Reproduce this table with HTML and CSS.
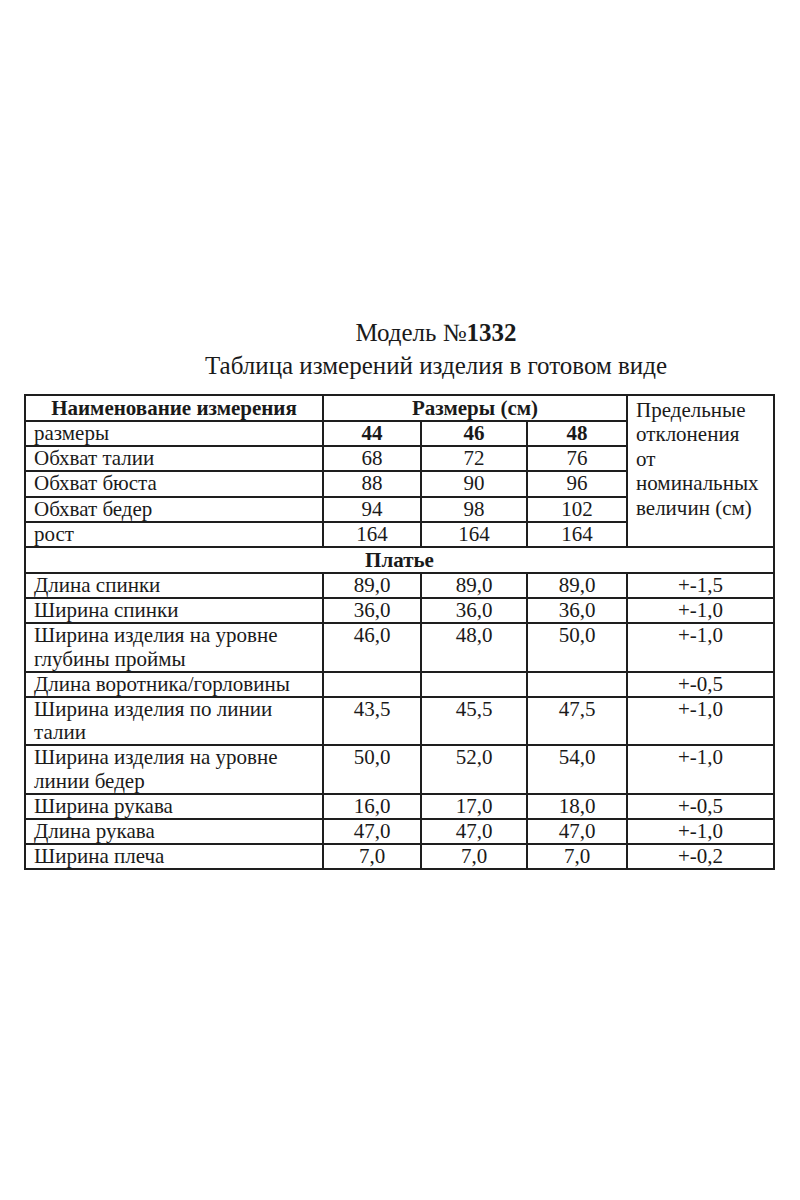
FILE: index.html
```html
<!DOCTYPE html>
<html lang="ru">
<head>
<meta charset="utf-8">
<link rel="stylesheet" href="styles.css">
</head>
<body>
<div class="page">
  <div class="titles">
    <div class="title">Модель №<b>1332</b></div>
    <div class="subtitle">Таблица измерений изделия в готовом виде</div>
  </div>
  <table class="sizes">
    <colgroup>
      <col class="c-name"><col class="c-s"><col class="c-s2"><col class="c-s3"><col class="c-dev">
    </colgroup>
    <tr class="r1">
      <th class="hname">Наименование измерения</th>
      <th colspan="3">Размеры (см)</th>
      <td rowspan="6" class="devhead">Предельные<br>отклонения<br>от<br>номинальных<br>величин (см)</td>
    </tr>
    <tr><td class="name">размеры</td><td class="num b">44</td><td class="num b">46</td><td class="num b">48</td></tr>
    <tr><td class="name">Обхват талии</td><td class="num">68</td><td class="num">72</td><td class="num">76</td></tr>
    <tr><td class="name">Обхват бюста</td><td class="num">88</td><td class="num">90</td><td class="num">96</td></tr>
    <tr><td class="name">Обхват бедер</td><td class="num">94</td><td class="num">98</td><td class="num">102</td></tr>
    <tr><td class="name">рост</td><td class="num">164</td><td class="num">164</td><td class="num">164</td></tr>
    <tr><th colspan="5" class="section">Платье</th></tr>
    <tr><td class="name">Длина спинки</td><td class="num">89,0</td><td class="num">89,0</td><td class="num">89,0</td><td class="num">+-1,5</td></tr>
    <tr><td class="name">Ширина спинки</td><td class="num">36,0</td><td class="num">36,0</td><td class="num">36,0</td><td class="num">+-1,0</td></tr>
    <tr><td class="name">Ширина изделия на уровне<br>глубины проймы</td><td class="num">46,0</td><td class="num">48,0</td><td class="num">50,0</td><td class="num">+-1,0</td></tr>
    <tr><td class="name">Длина воротника/горловины</td><td class="num"></td><td class="num"></td><td class="num"></td><td class="num">+-0,5</td></tr>
    <tr><td class="name">Ширина изделия по линии<br>талии</td><td class="num">43,5</td><td class="num">45,5</td><td class="num">47,5</td><td class="num">+-1,0</td></tr>
    <tr><td class="name">Ширина изделия на уровне<br>линии бедер</td><td class="num">50,0</td><td class="num">52,0</td><td class="num">54,0</td><td class="num">+-1,0</td></tr>
    <tr><td class="name">Ширина рукава</td><td class="num">16,0</td><td class="num">17,0</td><td class="num">18,0</td><td class="num">+-0,5</td></tr>
    <tr><td class="name">Длина рукава</td><td class="num">47,0</td><td class="num">47,0</td><td class="num">47,0</td><td class="num">+-1,0</td></tr>
    <tr><td class="name">Ширина плеча</td><td class="num">7,0</td><td class="num">7,0</td><td class="num">7,0</td><td class="num">+-0,2</td></tr>
  </table>
</div>
</body>
</html>
```
FILE: styles.css
```css
html, body {
  margin: 0;
  padding: 0;
  background: #ffffff;
}
body {
  font-family: "Liberation Serif", "Times New Roman", serif;
  color: #1a1a1a;
}
.page {
  width: 800px;
  height: 1200px;
  padding-top: 316px;
  box-sizing: border-box;
}
.titles {
  padding-left: 72px;
  text-align: center;
  margin-bottom: 12px;
}
.title {
  font-size: 25px;
  line-height: 33px;
}
.title b {
  font-weight: bold;
}
.subtitle {
  font-size: 25px;
  line-height: 33px;
}
.sizes {
  margin-left: 24px;
  width: 749px;
  table-layout: fixed;
  border-collapse: collapse;
  font-family: "Liberation Serif", "Times New Roman", serif;
  font-size: 21px;
  color: #1a1a1a;
}
.c-name { width: 298px; }
.c-s { width: 98px; }
.c-s2 { width: 106px; }
.c-s3 { width: 100px; }
.c-dev { width: 147px; }
.sizes th, .sizes td {
  border: 2px solid #1e1e1e;
  padding: 0 8px;
  line-height: 23.2px;
  vertical-align: top;
  font-weight: normal;
}
.sizes th {
  font-weight: bold;
  text-align: center;
}
.sizes .r1 th {
  line-height: 24px;
}
.name {
  text-align: left;
}
.num {
  text-align: center;
}
.sizes .b {
  font-weight: bold;
}
.sizes .devhead {
  text-align: left;
  line-height: 24.4px;
  padding-top: 2px;
}
.sizes .section {
  line-height: 24px;
}
```
